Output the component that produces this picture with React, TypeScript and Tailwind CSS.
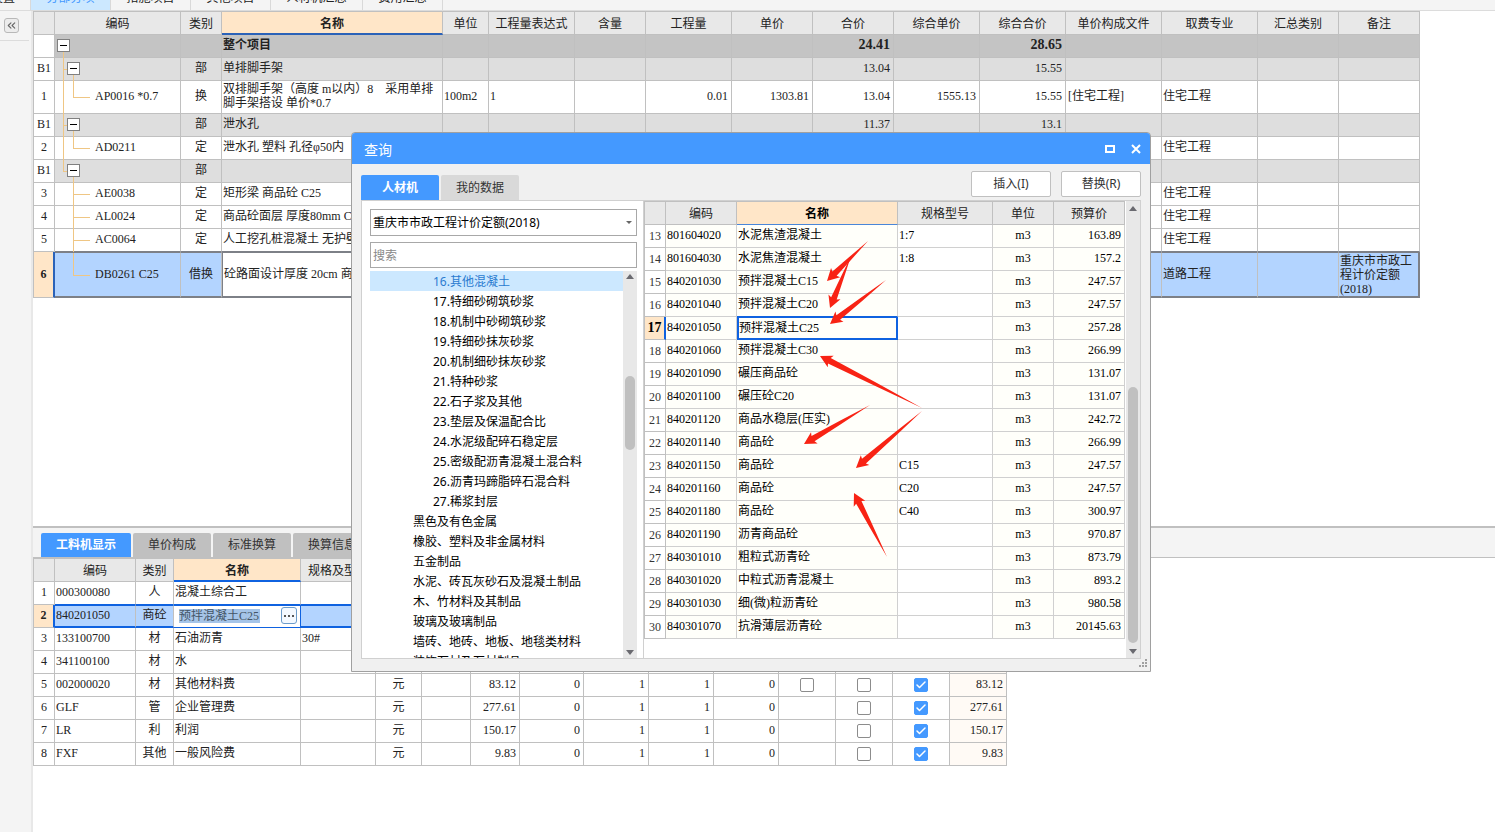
import React from "react";
import { twMerge } from "tailwind-merge";
import { Check, ChevronsLeft } from "lucide-react";

const GRID_FONT = "font-['Liberation_Serif','Noto_Sans_CJK_SC',serif] text-[12px] leading-[14px]";

type CellProps = React.TdHTMLAttributes<HTMLTableCellElement>;

function Td({ className, children, ...rest }: CellProps) {
  return (
    <td className={twMerge("border-r border-b border-[#c0c0c0] pt-0 pr-[3px] pb-[2px] pl-px", className)} {...rest}>
      {children}
    </td>
  );
}

function Th({ className, children }: { className?: string; children?: React.ReactNode }) {
  return (
    <th
      scope="col"
      className={twMerge(
        "h-[23px] overflow-hidden border-r border-b border-[#c0c0c0] bg-[#e8e8e8] px-0 pt-[2px] pb-0 text-center font-normal whitespace-nowrap",
        className,
      )}
    >
      {children}
    </th>
  );
}

function Columns({ widths }: { widths: number[] }) {
  return (
    <colgroup>
      {widths.map((w, i) => (
        <col key={i} style={{ width: w }} />
      ))}
    </colgroup>
  );
}

/* ---------- Main project grid ---------- */

type Kind = "root" | "group" | "item" | "current";
type Branch = "open" | "lastGroup" | "end" | "mid" | "endItem";

interface ProjectRow {
  no: string;
  kind: Kind;
  branch: Branch;
  guide?: boolean;
  code?: string;
  type?: string;
  name?: string;
  unit?: string;
  expr?: string;
  qty?: string;
  price?: string;
  total?: string;
  fullPrice?: string;
  fullTotal?: string;
  file?: string;
  trade?: string;
  note?: string;
}

const projectHeads = ["", "编码", "类别", "名称", "单位", "工程量表达式", "含量", "工程量", "单价", "合价", "综合单价", "综合合价", "单价构成文件", "取费专业", "汇总类别", "备注"];
const projectWidths = [21, 126, 41, 221, 46, 86, 71, 86, 81, 81, 86, 86, 96, 96, 81, 81];

const projectRows: ProjectRow[] = [
  { no: "", kind: "root", branch: "open", name: "整个项目", total: "24.41", fullTotal: "28.65" },
  { no: "B1", kind: "group", branch: "open", guide: true, type: "部", name: "单排脚手架", total: "13.04", fullTotal: "15.55" },
  { no: "1", kind: "item", branch: "endItem", guide: true, code: "AP0016 *0.7", type: "换", name: "双排脚手架（高度 m以内）8\u3000采用单排脚手架搭设 单价*0.7", unit: "100m2", expr: "1", qty: "0.01", price: "1303.81", total: "13.04", fullPrice: "1555.13", fullTotal: "15.55", file: "[住宅工程]", trade: "住宅工程" },
  { no: "B1", kind: "group", branch: "open", guide: true, type: "部", name: "泄水孔", total: "11.37", fullTotal: "13.1" },
  { no: "2", kind: "item", branch: "endItem", guide: true, code: "AD0211", type: "定", name: "泄水孔 塑料 孔径φ50内", trade: "住宅工程" },
  { no: "B1", kind: "group", branch: "lastGroup", type: "部" },
  { no: "3", kind: "item", branch: "mid", code: "AE0038", type: "定", name: "矩形梁 商品砼 C25", trade: "住宅工程" },
  { no: "4", kind: "item", branch: "mid", code: "AL0024", type: "定", name: "商品砼面层 厚度80mm C25", trade: "住宅工程" },
  { no: "5", kind: "item", branch: "mid", code: "AC0064", type: "定", name: "人工挖孔桩混凝土 无护壁", trade: "住宅工程" },
  { no: "6", kind: "current", branch: "endItem", code: "DB0261 C25", type: "借换", name: "砼路面设计厚度 20cm 商品砼", trade: "道路工程", note: "重庆市市政工程计价定额(2018)" },
];

function Toggle({ className }: { className: string }) {
  return (
    <button
      type="button"
      aria-label="折叠"
      className={twMerge("absolute top-1/2 -mt-[7px] flex h-[13px] w-[13px] items-center justify-center border border-[#808080] bg-white", className)}
    >
      <span className="h-px w-[7px] bg-black" />
    </button>
  );
}

function TreeLines({ row }: { row: ProjectRow }) {
  const line = "absolute bg-[#efc684]";
  if (row.kind === "root") {
    return (
      <>
        <span className={`${line} top-1/2 -bottom-px left-2 w-px`} />
        <Toggle className="left-[2px]" />
      </>
    );
  }
  if (row.kind === "group") {
    return (
      <>
        <span className={row.guide ? `${line} top-0 -bottom-px left-2 w-px` : `${line} top-0 bottom-1/2 left-2 w-px`} />
        <span className={`${line} top-1/2 left-2 h-px w-[5px]`} />
        <span className={`${line} top-1/2 -bottom-px left-[18px] w-px`} />
        <Toggle className="left-3" />
      </>
    );
  }
  return (
    <>
      {row.guide && <span className={`${line} top-0 -bottom-px left-2 w-px`} />}
      <span className={row.branch === "mid" ? `${line} top-0 -bottom-px left-[18px] w-px` : `${line} top-0 bottom-1/2 left-[18px] w-px`} />
      <span className={`${line} top-1/2 left-[18px] h-px w-[17px]`} />
    </>
  );
}

function ProjectGrid() {
  return (
    <table className={`w-[1387px] table-fixed border-separate border-spacing-0 border-t border-l border-[#c0c0c0] text-[#222] ${GRID_FONT}`}>
      <Columns widths={projectWidths} />
      <thead>
        <tr>
          {projectHeads.map((h, i) => (
            <Th key={i} className={h === "名称" ? "border-b-2 border-b-[#2b62b8] bg-[#ffe6c8] font-bold" : undefined}>
              {h}
            </Th>
          ))}
        </tr>
      </thead>
      <tbody>
        {projectRows.map((r, i) => {
          const current = r.kind === "current";
          const root = r.kind === "root";
          const height = current ? "h-[46px]" : i === 2 ? "h-[33px]" : "h-[23px]";
          const fill = root ? "bg-[#c4c4c4]" : r.kind === "group" ? "bg-[#dedede]" : current ? "bg-[#b3d4ff]" : "bg-white";
          const edge = current
            ? "border-t border-b-2 border-t-[#7d8087] border-b-[#7d8087]"
            : i === projectRows.length - 2
              ? "border-b-[#7d8087]"
              : "";
          const base = twMerge(height, fill, edge);
          const num = twMerge(base, "text-right", root && "text-[14px] font-bold");
          return (
            <tr key={i}>
              <Td className={current ? "border-r-2 border-r-[#2b62b8] bg-[#ffe6c8] px-0 text-center font-bold" : "px-0 text-center"}>{r.no}</Td>
              <Td className={twMerge(base, "relative pl-10 whitespace-nowrap")}>
                <TreeLines row={r} />
                {r.code}
              </Td>
              <Td className={twMerge(base, "px-0 text-center")}>{r.type}</Td>
              <Td className={twMerge(base, "overflow-hidden", i !== 2 && "whitespace-nowrap", root && "font-bold", current && "border-l border-l-[#7d8087] bg-white pl-px")}>
                {r.name}
              </Td>
              <Td className={base}>{r.unit}</Td>
              <Td className={base}>{r.expr}</Td>
              <Td className={base} />
              <Td className={num}>{r.qty}</Td>
              <Td className={num}>{r.price}</Td>
              <Td className={num}>{r.total}</Td>
              <Td className={num}>{r.fullPrice}</Td>
              <Td className={num}>{r.fullTotal}</Td>
              <Td className={twMerge(base, "pl-[2px]")}>{r.file}</Td>
              <Td className={base}>{r.trade}</Td>
              <Td className={base} />
              <Td className={twMerge(base, current && "border-r-2 border-r-[#7d8087] pb-0")}>{r.note}</Td>
            </tr>
          );
        })}
      </tbody>
    </table>
  );
}

/* ---------- Resource grid ---------- */

const resourceHeads = ["", "编码", "类别", "名称", "规格及型号", "", "", "", "", "", "", "", "", "", "", ""];
const resourceWidths = [21, 81, 38, 127, 75, 46, 49, 49, 64, 65, 65, 65, 57, 57, 57, 57];

interface ResourceRow {
  code: string;
  type: string;
  name: string;
  spec?: string;
  amount?: string;
  firstBox?: boolean;
}

const resourceRows: ResourceRow[] = [
  { code: "000300080", type: "人", name: "混凝土综合工" },
  { code: "840201050", type: "商砼", name: "预拌混凝土C25" },
  { code: "133100700", type: "材", name: "石油沥青", spec: "30#" },
  { code: "341100100", type: "材", name: "水" },
  { code: "002000020", type: "材", name: "其他材料费", amount: "83.12", firstBox: true },
  { code: "GLF", type: "管", name: "企业管理费", amount: "277.61" },
  { code: "LR", type: "利", name: "利润", amount: "150.17" },
  { code: "FXF", type: "其他", name: "一般风险费", amount: "9.83" },
];

function Tick({ label, on }: { label: string; on?: boolean }) {
  return (
    <label className="relative mx-auto block h-[14px] w-[14px]">
      <input
        type="checkbox"
        aria-label={label}
        defaultChecked={on}
        className="peer block h-[14px] w-[14px] appearance-none rounded-[2px] border border-[#8c8c8c] bg-white checked:border-[#4499ff] checked:bg-[#4499ff]"
      />
      <Check size={12} strokeWidth={3} className="pointer-events-none absolute top-px left-px hidden text-white peer-checked:block" />
    </label>
  );
}

function ResourceGrid() {
  return (
    <table className={`w-[974px] table-fixed border-separate border-spacing-0 border-t border-l border-[#c0c0c0] text-[#222] ${GRID_FONT}`}>
      <Columns widths={resourceWidths} />
      <thead>
        <tr>
          {resourceHeads.map((h, i) => (
            <Th key={i} className={h === "名称" ? "border-b-2 border-b-[#0f62e0] bg-[#ffe6c8] font-bold" : undefined}>
              {h}
            </Th>
          ))}
        </tr>
      </thead>
      <tbody>
        {resourceRows.map((r, i) => {
          const current = i === 1;
          const base = current
            ? "h-[23px] border-t border-b-2 border-t-[#0f62e0] border-b-[#0f62e0] bg-[#b3d4ff]"
            : i === 0
              ? "h-[23px] border-b-[#0f62e0]"
              : "h-[23px]";
          const num = twMerge(base, "text-right");
          const box = twMerge(base, "px-0 pb-0");
          const has = Boolean(r.amount);
          return (
            <tr key={r.code}>
              <Td className={current ? "border-r-2 border-r-[#0f62e0] bg-[#ffe6c8] px-0 text-center font-bold" : "h-[23px] px-0 text-center"}>{i + 1}</Td>
              <Td className={base}>{r.code}</Td>
              <Td className={twMerge(base, "px-0 text-center")}>{r.type}</Td>
              <Td className={twMerge(base, current && "border-r-[#0f62e0] border-b bg-white")}>
                {current ? (
                  <div className="flex items-center justify-between pl-1">
                    <input aria-label="名称" defaultValue={r.name} className="h-[14px] w-[81px] bg-[#a5c4e8] p-0 text-[#445566] outline-none" />
                    <button type="button" aria-label="选择" className="flex h-[17px] w-4 items-center justify-center gap-[2px] rounded-[3px] border border-[#6c9bc9] bg-[#f4f9ff]">
                      <span className="h-[2px] w-[2px] bg-[#555]" />
                      <span className="h-[2px] w-[2px] bg-[#555]" />
                      <span className="h-[2px] w-[2px] bg-[#555]" />
                    </button>
                  </div>
                ) : (
                  r.name
                )}
              </Td>
              <Td className={base}>{r.spec}</Td>
              <Td className={twMerge(base, "px-0 text-center")}>{has && "元"}</Td>
              <Td className={base} />
              <Td className={num}>{r.amount}</Td>
              <Td className={num}>{has && "0"}</Td>
              <Td className={num}>{has && "1"}</Td>
              <Td className={num}>{has && "1"}</Td>
              <Td className={num}>{has && "0"}</Td>
              <Td className={box}>{r.firstBox && <Tick label="暂估" />}</Td>
              <Td className={box}>{has && <Tick label="锁定" />}</Td>
              <Td className={box}>{has && <Tick label="计价" on />}</Td>
              <Td className={twMerge(num, !current && "bg-[#fffaf5]")}>{r.amount}</Td>
            </tr>
          );
        })}
      </tbody>
    </table>
  );
}

/* ---------- Query dialog ---------- */

const catalog: { text: string; deep?: boolean }[] = [
  { text: "16.其他混凝土", deep: true },
  { text: "17.特细砂砌筑砂浆", deep: true },
  { text: "18.机制中砂砌筑砂浆", deep: true },
  { text: "19.特细砂抹灰砂浆", deep: true },
  { text: "20.机制细砂抹灰砂浆", deep: true },
  { text: "21.特种砂浆", deep: true },
  { text: "22.石子浆及其他", deep: true },
  { text: "23.垫层及保温配合比", deep: true },
  { text: "24.水泥级配碎石稳定层", deep: true },
  { text: "25.密级配沥青混凝土混合料", deep: true },
  { text: "26.沥青玛蹄脂碎石混合料", deep: true },
  { text: "27.稀浆封层", deep: true },
  { text: "黑色及有色金属" },
  { text: "橡胶、塑料及非金属材料" },
  { text: "五金制品" },
  { text: "水泥、砖瓦灰砂石及混凝土制品" },
  { text: "木、竹材料及其制品" },
  { text: "玻璃及玻璃制品" },
  { text: "墙砖、地砖、地板、地毯类材料" },
  { text: "装饰石材及石材制品" },
];

const materials: [string, string, string, string][] = [
  ["801604020", "水泥焦渣混凝土", "1:7", "163.89"],
  ["801604030", "水泥焦渣混凝土", "1:8", "157.2"],
  ["840201030", "预拌混凝土C15", "", "247.57"],
  ["840201040", "预拌混凝土C20", "", "247.57"],
  ["840201050", "预拌混凝土C25", "", "257.28"],
  ["840201060", "预拌混凝土C30", "", "266.99"],
  ["840201090", "碾压商品砼", "", "131.07"],
  ["840201100", "碾压砼C20", "", "131.07"],
  ["840201120", "商品水稳层(压实)", "", "242.72"],
  ["840201140", "商品砼", "", "266.99"],
  ["840201150", "商品砼", "C15", "247.57"],
  ["840201160", "商品砼", "C20", "247.57"],
  ["840201180", "商品砼", "C40", "300.97"],
  ["840201190", "沥青商品砼", "", "970.87"],
  ["840301010", "粗粒式沥青砼", "", "873.79"],
  ["840301020", "中粒式沥青混凝土", "", "893.2"],
  ["840301030", "细(微)粒沥青砼", "", "980.58"],
  ["840301070", "抗滑薄层沥青砼", "", "20145.63"],
];

const materialWidths = [21, 71, 161, 95, 61, 71];

function Caret({ down }: { down?: boolean }) {
  return (
    <svg width="8" height="5" viewBox="0 0 8 5" className="shrink-0" aria-hidden="true">
      <path d={down ? "M0 0H8L4 5Z" : "M0 5H8L4 0Z"} fill="#6a6a70" />
    </svg>
  );
}

function MaterialGrid() {
  return (
    <table className={`w-[481px] table-fixed border-separate border-spacing-0 self-start border-t border-l border-[#c0c0c0] text-black ${GRID_FONT}`}>
      <Columns widths={materialWidths} />
      <thead>
        <tr>
          {["", "编码", "名称", "规格型号", "单位", "预算价"].map((h, i) => (
            <Th key={i} className={h === "名称" ? "border-b-[#4a86d8] bg-[#ffe6c8] font-bold" : "text-[#222]"}>
              {h}
            </Th>
          ))}
        </tr>
      </thead>
      <tbody>
        {materials.map(([code, name, spec, price], i) => {
          const current = i === 4;
          const cell = "h-[23px] border-[#d0d0d0] bg-[#fffffa]";
          return (
            <tr key={code}>
              <Td className={twMerge("h-[23px] px-0 pb-0 text-center text-[#333]", current && "border-r-2 border-r-[#0f62e0] bg-[#ffe6c8] text-[14px] font-bold text-black")}>{i + 13}</Td>
              <Td className={cell}>{code}</Td>
              <Td className={twMerge(cell, current && "border-t border-r-2 border-b-2 border-l-2 border-[#0f62e0] px-0 pb-px", i === 3 && "border-b-[#0f62e0]")}>{name}</Td>
              <Td className={twMerge(cell, "bg-white")}>{spec}</Td>
              <Td className={twMerge(cell, "px-0 text-center")}>m3</Td>
              <Td className={twMerge(cell, "text-right")}>{price}</Td>
            </tr>
          );
        })}
      </tbody>
    </table>
  );
}

const arrows: [number, number, number, number][] = [
  [827, 281, 868, 241],
  [830, 308, 851, 256],
  [830, 324, 886, 280],
  [820, 356, 922, 408],
  [804, 444, 870, 405],
  [856, 468, 922, 411],
  [854, 493, 887, 557],
];

function arrowPoints([tx, ty, ex, ey]: [number, number, number, number]) {
  const len = Math.hypot(ex - tx, ey - ty);
  const ux = (ex - tx) / len;
  const uy = (ey - ty) / len;
  const at = (along: number, side: number) => `${tx + ux * along - uy * side},${ty + uy * along + ux * side}`;
  return [at(0, 0), at(12, 6.5), at(10.5, 3), at(len * 0.55, 1.7), at(len, 0), at(len * 0.55, -1.7), at(10.5, -3), at(12, -6.5)].join(" ");
}

function Annotations() {
  return (
    <svg viewBox="351 132 800 540" className="pointer-events-none absolute -top-px -left-px h-[540px] w-[800px]" aria-hidden="true">
      {arrows.map((a) => (
        <polygon key={a.join("-")} points={arrowPoints(a)} fill="#f82314" />
      ))}
    </svg>
  );
}

function QueryDialog() {
  const action = "h-[26px] w-20 rounded-[2px] border border-[#c0c0c0] bg-white text-[12px] text-[#333]";
  return (
    <section
      role="dialog"
      aria-label="查询"
      className="absolute top-[132px] left-[351px] flex h-[540px] w-[800px] flex-col rounded-t-[4px] border border-[#a0a0a0] bg-[#f0f0f0] text-[12px] leading-4"
    >
      <header className="flex h-[31px] shrink-0 items-center justify-between rounded-t-[3px] bg-[#4499ff] pr-[9px] pl-3 text-white">
        <h2 className="pt-[2px] text-[14px] leading-5">查询</h2>
        <div className="flex items-center gap-4">
          <button type="button" aria-label="最大化" className="flex h-[10px] w-[10px] items-center">
            <span className="h-2 w-[10px] border-2 border-white" />
          </button>
          <button type="button" aria-label="关闭" className="h-[10px] w-[10px]">
            <svg width="10" height="10" viewBox="0 0 10 10" aria-hidden="true">
              <path d="M1 1L9 9M9 1L1 9" stroke="#fff" strokeWidth="2" />
            </svg>
          </button>
        </div>
      </header>
      <div className="flex min-h-0 flex-1 flex-col px-[9px] pb-3">
        <div className="flex h-[36px] shrink-0 items-end justify-between">
          <div role="tablist" className="flex gap-[2px]">
            <button type="button" role="tab" aria-selected="true" className="h-[25px] w-[78px] rounded-t-[2px] bg-[#4499ff] font-bold text-white">
              人材机
            </button>
            <button type="button" role="tab" aria-selected="false" className="h-[25px] w-[78px] rounded-t-[2px] bg-[#d9d9d9] text-[#333]">
              我的数据
            </button>
          </div>
          <div className="flex gap-[10px] pb-[3px]">
            <button type="button" className={action}>插入(I)</button>
            <button type="button" className={action}>替换(R)</button>
          </div>
        </div>
        <div className="flex min-h-0 flex-1 border border-[#d0d0d0] bg-white">
          <div className="flex min-w-0 flex-1 flex-col gap-[6px] pt-2 pr-[6px] pl-2">
            <div className="relative shrink-0">
              <select aria-label="定额库" className="block h-[27px] w-full appearance-none border border-[#a8a8a8] bg-white px-[2px] text-black">
                <option>重庆市市政工程计价定额(2018)</option>
              </select>
              <svg width="6" height="3" viewBox="0 0 6 3" className="pointer-events-none absolute top-3 right-[5px]" aria-hidden="true">
                <path d="M0 0H6L3 3Z" fill="#666" />
              </svg>
            </div>
            <input type="search" aria-label="搜索" placeholder="搜索" className="block h-[26px] w-full shrink-0 border border-[#a8a8a8] bg-white px-[2px] placeholder:text-[#888]" />
            <div className="-mt-[3px] flex min-h-0 flex-1">
              <ul className="min-w-0 flex-1 overflow-hidden text-black">
                {catalog.map((c, i) => (
                  <li key={c.text}>
                    <button
                      type="button"
                      className={twMerge("block h-5 w-full pt-[2px] pl-[43px] text-left whitespace-nowrap", c.deep && "pl-[63px]", i === 0 && "bg-[#cce8ff] text-[#2a7bd0]")}
                    >
                      {c.text}
                    </button>
                  </li>
                ))}
              </ul>
              <div className="flex w-[14px] flex-col items-center bg-[#e8e8e8] py-[3px]">
                <Caret />
                <div className="mt-[97px] h-[74px] w-[10px] rounded-full bg-[#c0c0c0]" />
                <div className="mt-auto">
                  <Caret down />
                </div>
              </div>
            </div>
          </div>
          <div className="flex border-l border-[#d0d0d0]">
            <MaterialGrid />
            <div className="ml-px flex w-[14px] flex-col items-center bg-[#e8e8e8] pt-[5px] pb-1">
              <Caret />
              <div className="mt-auto mb-[6px] h-64 w-[10px] rounded-full bg-[#c0c0c0]" />
              <Caret down />
            </div>
          </div>
        </div>
      </div>
      <svg width="9" height="9" viewBox="0 0 9 9" className="absolute right-[2px] bottom-[3px]" aria-hidden="true">
        <path d="M6 0h2v2h-2zM3 3h2v2h-2zM6 3h2v2h-2zM0 6h2v2h-2zM3 6h2v2h-2zM6 6h2v2h-2z" fill="#a0a0a0" />
      </svg>
      <Annotations />
    </section>
  );
}

/* ---------- Page ---------- */

function TopTabs() {
  const tab = "flex h-6 items-center justify-center border-r border-[#d9d9d9]";
  return (
    <nav className="flex h-[11px] shrink-0 items-end overflow-hidden border-b border-[#dcdcdc] bg-[#f4f4f4] text-[12px] text-[#222]">
      <a href="#settings" className="flex h-6 w-[31px] items-center justify-end border-r border-[#d9d9d9] pr-[15px] whitespace-nowrap">设置</a>
      <a href="#sections" className={`${tab} w-20 bg-[#cce8ff] text-[#4499ff]`}>分部分项</a>
      <a href="#measures" className={`${tab} w-20`}>措施项目</a>
      <a href="#others" className={`${tab} w-20`}>其他项目</a>
      <a href="#resources" className={`${tab} w-[92px]`}>人材机汇总</a>
      <a href="#fees" className={`${tab} w-20`}>费用汇总</a>
    </nav>
  );
}

export default function App() {
  const lower = "h-6 w-[78px] rounded-t-[2px] bg-[#c0c0c0] whitespace-nowrap text-[#333]";
  return (
    <div className="relative flex h-screen flex-col overflow-hidden bg-white font-['Noto_Sans','Noto_Sans_CJK_SC',sans-serif]">
      <TopTabs />
      <div className="flex min-h-0 flex-1">
        <aside className="w-[33px] shrink-0 border-r-2 border-[#e8e8e8] bg-[#f4f4f4]">
          <div className="mr-[2px] flex h-[30px] items-center border-b border-[#dcdcdc] pl-1">
            <button type="button" aria-label="收起" className="flex h-[15px] w-[15px] items-center justify-center rounded-[3px] border border-[#b8b8b8] bg-[#ececec] text-[#666]">
              <ChevronsLeft size={13} strokeWidth={2} className="shrink-0" />
            </button>
          </div>
        </aside>
        <main className="flex min-w-0 flex-1 flex-col">
          <div className="min-h-0 flex-1 overflow-hidden">
            <ProjectGrid />
          </div>
          <div className="h-[306px] shrink-0 overflow-hidden border-t-2 border-[#c0c0c0]">
            <div role="tablist" className="flex h-[30px] items-end gap-[2px] border-b border-[#c0c0c0] bg-[#f4f4f4] pl-2 text-[12px]">
              <button type="button" role="tab" aria-selected="true" className="h-6 w-[90px] rounded-t-[2px] bg-[#4499ff] font-bold text-white">
                工料机显示
              </button>
              <button type="button" role="tab" aria-selected="false" className={lower}>单价构成</button>
              <button type="button" role="tab" aria-selected="false" className={lower}>标准换算</button>
              <button type="button" role="tab" aria-selected="false" className={lower}>换算信息</button>
            </div>
            <ResourceGrid />
          </div>
        </main>
      </div>
      <QueryDialog />
    </div>
  );
}
